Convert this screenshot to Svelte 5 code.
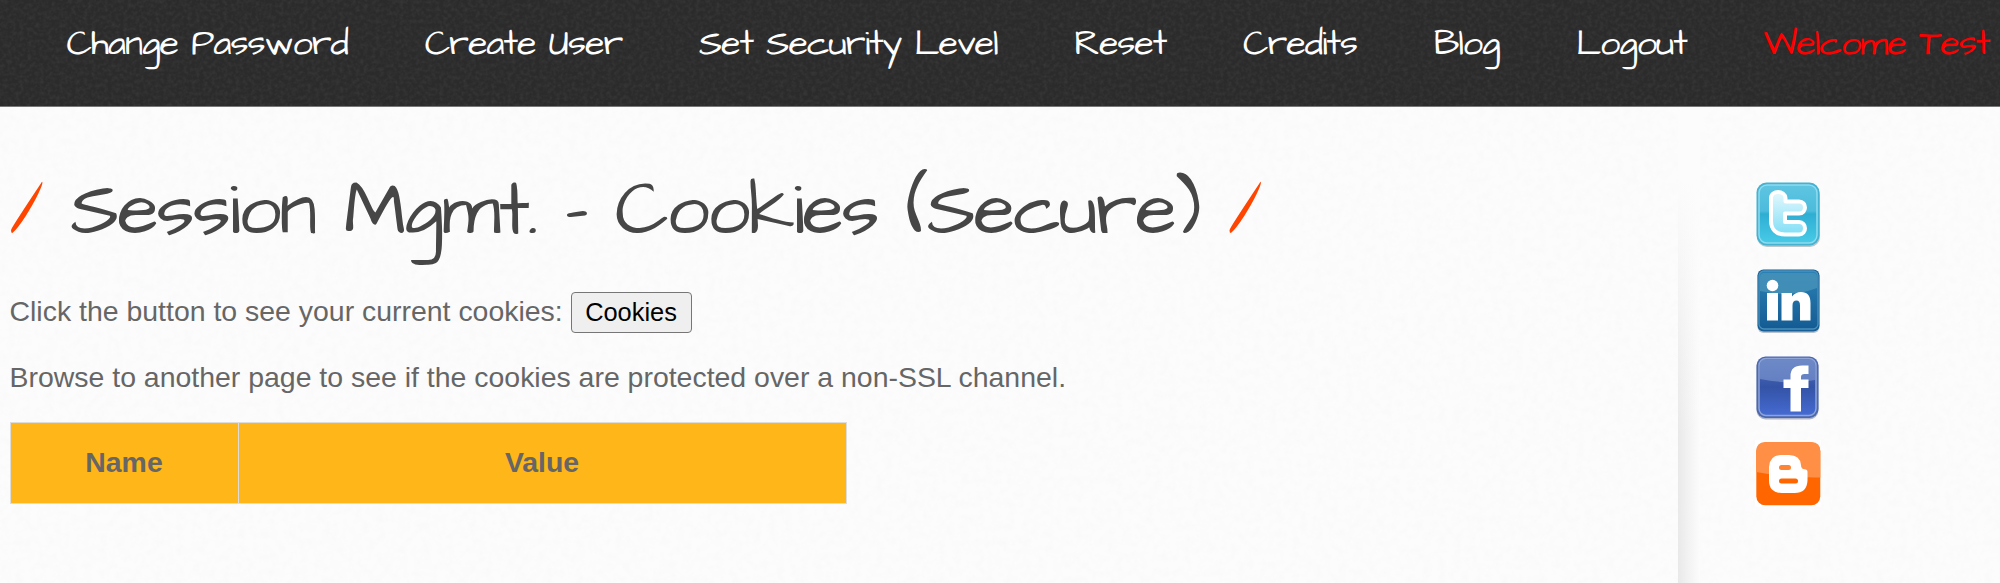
<script>
  const nav = ['Change Password', 'Create User', 'Set Security Level', 'Reset', 'Credits', 'Blog', 'Logout'];
</script>

<div class="page">
  <svg class="grain" aria-hidden="true">
    <filter id="light" x="0" y="0" width="100%" height="100%">
      <feTurbulence type="fractalNoise" baseFrequency="0.13" numOctaves="3" seed="4" />
      <feColorMatrix values="0 0 0 0 0.5  0 0 0 0 0.5  0 0 0 0 0.5  0.08 0 0 0 -0.03" />
    </filter>
    <filter id="dark" x="0" y="0" width="100%" height="100%">
      <feTurbulence type="fractalNoise" baseFrequency="0.25" numOctaves="3" seed="8" />
      <feColorMatrix values="0 0 0 0 0.7  0 0 0 0 0.7  0 0 0 0 0.7  0.13 0 0 0 -0.05" />
    </filter>
    <rect width="2000" height="106" filter="url(#dark)" />
    <rect y="107" width="2000" height="476" filter="url(#light)" />
  </svg>

  <header>
    <nav>
      {#each nav as item}
        <a>{item}</a>
      {/each}
      <a class="hot">Welcome Test</a>
    </nav>
  </header>

  <div class="body">
    <main>
      <h1><span>/</span> Session Mgmt. - Cookies (Secure) <span>/</span></h1>
      <div class="line first"><span>Click the button to see your current cookies:</span><button>Cookies</button></div>
      <div class="line second">Browse to another page to see if the cookies are protected over a non-SSL channel.</div>
      <div class="table">
        <div>Name</div>
        <div>Value</div>
      </div>
    </main>

    <aside>
      <svg viewBox="0 0 64 66">
        <defs>
          <linearGradient id="tw" x2="0" y2="1"><stop stop-color="#5fc5e2" /><stop offset=".45" stop-color="#4cbbdc" /><stop offset=".5" stop-color="#2faed3" /><stop offset="1" stop-color="#47cae7" /></linearGradient>
          <linearGradient id="bird" x2="0" y2="1"><stop stop-color="#e4f8fe" /><stop offset="1" stop-color="#82dff5" /></linearGradient>
        </defs>
        <rect x="1" y="3" width="63" height="62" rx="10" fill="#8c9a9e" opacity=".55" />
        <rect x=".5" y=".5" width="63" height="63" rx="10" fill="#45b2d2" />
        <rect x="3" y="3" width="58" height="58" rx="8" fill="url(#tw)" stroke="#8edcf0" stroke-width="1.5" />
        <path d="M15 16 C15 8 29 8 29.500 16 V19.500 H43 C51 19.500 51 31.500 43 31.500 H29 V40 H43 C51 40 51 52.500 43 52.500 H29 C20 52.500 15 47 15 39 Z" fill="url(#bird)" stroke="#fff" stroke-width="4" stroke-linejoin="round" />
      </svg>
      <svg viewBox="0 0 64 66">
        <defs><linearGradient id="li" x2="0" y2="1"><stop stop-color="#2b82b4" /><stop offset="1" stop-color="#145b94" /></linearGradient></defs>
        <rect x="1.500" y="2" width="62" height="62" rx="6" fill="#8b9dad" opacity=".6" />
        <rect x="1.500" y=".5" width="62" height="62" rx="6" fill="#175f96" />
        <rect x="3" y="2" width="59" height="58" rx="5" fill="url(#li)" stroke="#4990bb" stroke-width="1.300" />
        <path d="M4 8 Q4 4 8 4 H57 Q61 4 61 8 V19 Q35 29 4 22 Z" fill="#4592b8" opacity=".85" />
        <circle cx="16.500" cy="16.500" r="5.800" fill="#fff" />
        <path d="M11 24 H22 V51.500 H11 Z M25.500 24 H36 V27.500 Q39.500 23 45 23 Q54.500 23 54.500 34 V51.500 H44 V36.500 Q44 31.500 40.500 31.500 Q36.500 31.500 36.500 36.500 V51.500 H25.500 Z" fill="#fff" />
      </svg>
      <svg viewBox="0 0 64 66">
        <defs><linearGradient id="fb" x2="0" y2="1"><stop stop-color="#5571b7" /><stop offset=".5" stop-color="#3453a6" /><stop offset="1" stop-color="#456bd2" /></linearGradient></defs>
        <rect x=".5" y="2" width="62" height="61.500" rx="9" fill="#7e88a8" opacity=".6" />
        <rect x=".5" y=".5" width="62" height="61.500" rx="9" fill="#4a68af" />
        <rect x="3" y="2.500" width="57" height="57" rx="7" fill="url(#fb)" stroke="#8fa4d6" stroke-width="1.500" />
        <path d="M4 9 Q4 3.500 9 3.500 H54 Q59 3.500 59 9 V24 Q33 29 4 23 Z" fill="#7c96cf" opacity=".65" />
        <path d="M34.500 55.500 V32 H27.500 V23.500 H34.500 V20 Q34.500 9.500 46 9.500 H52.500 V18 H48.500 Q45 18 45 21 V23.500 H52.500 V32 H45 V55.500 Z" fill="#fff" />
      </svg>
      <svg viewBox="0 0 64 66">
        <rect x="-1" y="-2" width="66" height="67" fill="#fff" opacity=".7" />
        <rect x=".3" y=".3" width="64" height="63" rx="9" fill="#ff6600" />
        <path d="M.3 9 Q.3 .3 9 .3 H55.500 Q64.300 .3 64.300 9 V35.500 Q32 36 .3 30 Z" fill="#ff8f45" />
        <path d="M25 13 H33 Q44 13 45 23 Q45 27 48.500 27.300 Q51.500 27.300 51.500 30 V38.500 Q51 51 38.500 51 H25.500 Q13 50.500 13 38.500 V25 Q13.500 13.500 25 13 Z" fill="#fff" />
        <rect x="23" y="23" width="12" height="5" rx="2.500" fill="#ff8433" />
        <rect x="23" y="36.500" width="19" height="5" rx="2.500" fill="#ff6600" />
      </svg>
    </aside>
  </div>
</div>

<style>
  :global(body) { margin: 0; }
  .page {
    position: relative;
    isolation: isolate;
    width: 2000px;
    height: 583px;
    overflow: hidden;
    background: linear-gradient(#2b2b2b 106px, #777 106px, #777 107px, #fcfcfc 107px);
    font-family: "Liberation Sans", Arial, sans-serif;
    color: #666;
  }
  .grain { position: absolute; inset: 0; width: 2000px; height: 583px; z-index: -1; pointer-events: none; }
  header {
    box-sizing: border-box;
    height: 107px;
    padding: 20.500px 0 0 66.500px;
  }
  nav { display: flex; gap: 76.700px; }
  nav a {
    flex: none;
    font: 400 36px/46px "Architects Daughter", cursive;
    letter-spacing: -1.050px;
    color: #fff;
    white-space: nowrap;
  }
  nav .hot { color: #f00; }
  svg { display: block; overflow: visible; }
  .body { display: flex; height: 476px; }
  main { box-sizing: border-box; width: 1678px; padding: 52px 0 0 9.500px; }
  h1 {
    margin: 0;
    height: 107px;
    font: 400 76px/104px "Architects Daughter", cursive;
    letter-spacing: -1.980px;
    color: #464646;
    white-space: nowrap;
  }
  h1 span { color: #ff4500; }
  .line { display: flex; align-items: center; height: 40px; font-size: 28.450px; white-space: nowrap; }
  .first { margin-top: 26px; gap: 9px; }
  .first span { width: 552px; padding-bottom: 1px; }
  .second { margin-top: 25px; }
  button {
    box-sizing: border-box;
    width: 121px;
    height: 41px;
    padding: 0;
    border: 1.500px solid #767676;
    border-radius: 4px;
    background: #efefef;
    color: #000;
    font: 25.400px "Liberation Sans", Arial, sans-serif;
  }
  .table {
    box-sizing: border-box;
    display: grid;
    grid-template-columns: 227px 1fr;
    gap: 1px;
    width: 837px;
    height: 82px;
    margin-top: 25px;
    border: 1px solid #ddd;
    background: #ddd;
  }
  .table div {
    display: flex;
    align-items: center;
    justify-content: center;
    padding-bottom: 2px;
    background: #ffb618;
    font-size: 28.420px;
    font-weight: 700;
  }
  aside {
    box-sizing: border-box;
    display: flex;
    flex-direction: column;
    gap: 20.700px;
    width: 322px;
    padding: 75.300px 0 0 78px;
    background:
      linear-gradient(#fcfcfc 70px, rgba(252, 252, 252, 0) 330px) 0 0 / 22px 100% no-repeat,
      linear-gradient(90deg, #e9e9e9, #f2f2f2 10px, #fcfcfc 22px) 0 0 / 22px 100% no-repeat;
  }
  aside svg { width: 64px; height: 66px; flex: none; }
</style>
